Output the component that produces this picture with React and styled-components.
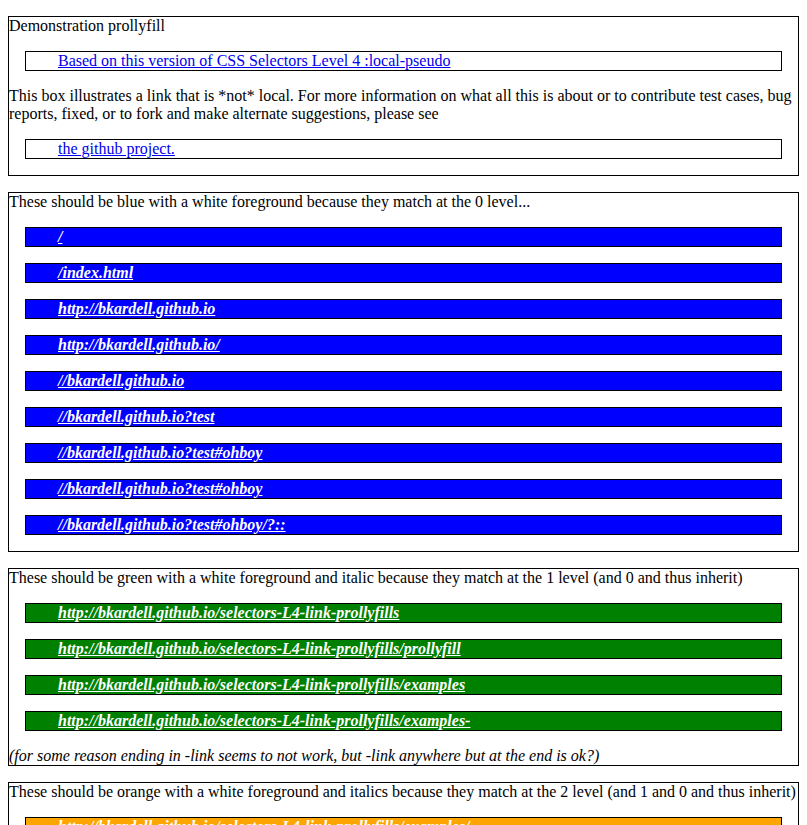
import React from "react";
import styled, { createGlobalStyle } from "styled-components";

const Global = createGlobalStyle`
  html, body {
    margin: 0;
    padding: 0;
  }
  body {
    font-family: "Liberation Serif", "Times New Roman", serif;
    font-size: 16px;
    line-height: 18px;
    color: #000;
    background: #fff;
  }
`;

const Page = styled.div`
  display: flow-root;
  padding: 0 8px;
`;

const Section = styled.div`
  margin: 16px 0;
  border: 1px solid #000;
`;

const LinkBox = styled.div`
  margin: 16px;
  border: 1px solid #000;
  padding-left: 32px;
  background: ${(p) => p.$bg || "transparent"};
`;

const PlainLink = styled.a`
  color: #0000ee;
  text-decoration: underline;
`;

const TestLink = styled.a`
  color: #fff;
  font-weight: bold;
  font-style: italic;
  text-decoration: underline;
`;

const Note = styled.div`
  font-style: italic;
`;

const level0 = [
  "/",
  "/index.html",
  "http://bkardell.github.io",
  "http://bkardell.github.io/",
  "//bkardell.github.io",
  "//bkardell.github.io?test",
  "//bkardell.github.io?test#ohboy",
  "//bkardell.github.io?test#ohboy",
  "//bkardell.github.io?test#ohboy/?::",
];

const level1 = [
  "http://bkardell.github.io/selectors-L4-link-prollyfills",
  "http://bkardell.github.io/selectors-L4-link-prollyfills/prollyfill",
  "http://bkardell.github.io/selectors-L4-link-prollyfills/examples",
  "http://bkardell.github.io/selectors-L4-link-prollyfills/examples-",
];

const level2 = [
  "http://bkardell.github.io/selectors-L4-link-prollyfills/examples/",
  "http://bkardell.github.io/selectors-L4-link-prollyfills/examples/index.html",
];

export default function App() {
  return (
    <Page>
      <Global />
      <Section>
        Demonstration prollyfill
        <LinkBox>
          <PlainLink href="#">Based on this version of CSS Selectors Level 4 :local-pseudo</PlainLink>
        </LinkBox>
        This box illustrates a link that is *not* local. For more information on what all this is about or to contribute test cases, bug reports, fixed, or to fork and make alternate suggestions, please see
        <LinkBox>
          <PlainLink href="#">the github project.</PlainLink>
        </LinkBox>
      </Section>
      <Section>
        These should be blue with a white foreground because they match at the 0 level...
        {level0.map((t, i) => (
          <LinkBox key={i} $bg="#0000ff">
            <TestLink href="#">{t}</TestLink>
          </LinkBox>
        ))}
      </Section>
      <Section>
        These should be green with a white foreground and italic because they match at the 1 level (and 0 and thus inherit)
        {level1.map((t, i) => (
          <LinkBox key={i} $bg="#008000">
            <TestLink href="#">{t}</TestLink>
          </LinkBox>
        ))}
        <Note>(for some reason ending in -link seems to not work, but -link anywhere but at the end is ok?)</Note>
      </Section>
      <Section>
        These should be orange with a white foreground and italics because they match at the 2 level (and 1 and 0 and thus inherit)
        {level2.map((t, i) => (
          <LinkBox key={i} $bg="#ffa500">
            <TestLink href="#">{t}</TestLink>
          </LinkBox>
        ))}
      </Section>
    </Page>
  );
}
